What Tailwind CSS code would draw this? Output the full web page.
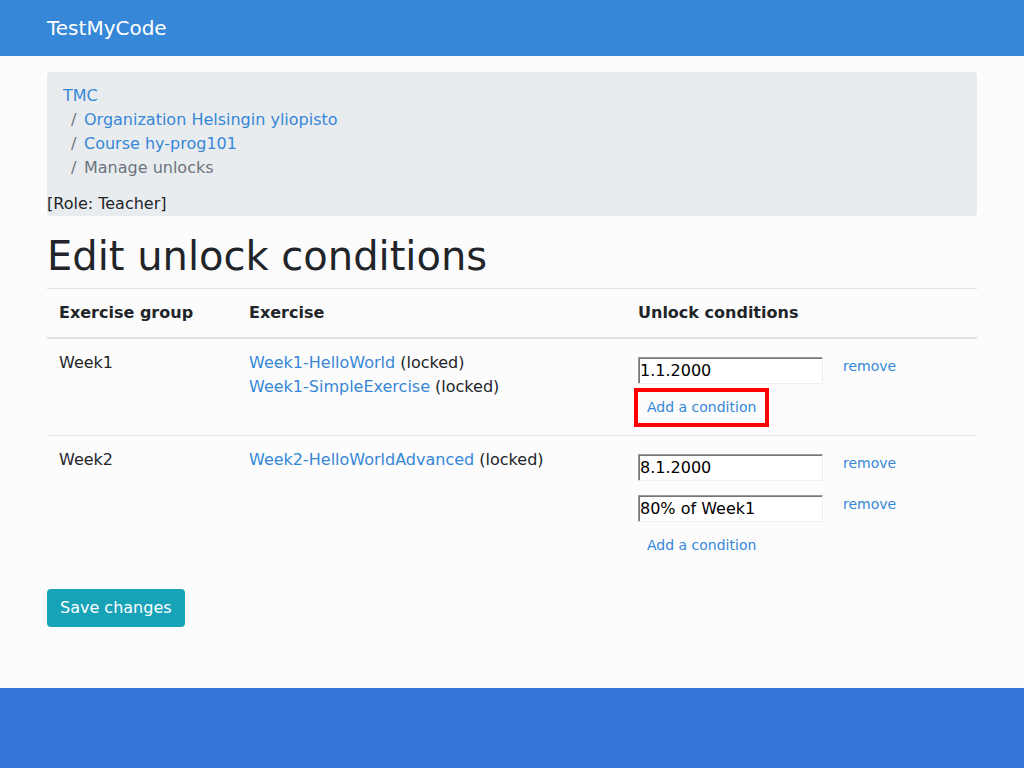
<!DOCTYPE html>
<html lang="en">
<head>
<meta charset="utf-8">
<meta name="viewport" content="width=device-width, initial-scale=1">
<title>Edit unlock conditions - TestMyCode</title>
<script src="https://cdn.jsdelivr.net/npm/@tailwindcss/browser@4"></script>
</head>
<body class="flex min-h-screen flex-col bg-[#fcfcfc] font-['DejaVu_Sans',sans-serif] text-base text-[#212529]">
<header class="bg-[#3687d7]">
  <nav class="mx-auto flex h-14 w-full max-w-[960px] items-center px-[15px]">
    <a href="#" class="text-xl text-white">TestMyCode</a>
  </nav>
</header>
<main class="mx-auto w-full max-w-[960px] grow px-[15px] pt-4 pb-10">
  <div class="rounded bg-[#e9ecef]">
    <nav aria-label="Breadcrumb">
      <ol class="px-4 py-3 text-[#6c757d]">
        <li><a href="#" class="text-[#3687d7]">TMC</a></li>
        <li class="flex pl-2"><span class="w-[13px]">/</span><a href="#" class="text-[#3687d7]">Organization Helsingin yliopisto</a></li>
        <li class="flex pl-2"><span class="w-[13px]">/</span><a href="#" class="text-[#3687d7]">Course hy-prog101</a></li>
        <li class="flex pl-2" aria-current="page"><span class="w-[13px]">/</span><span>Manage unlocks</span></li>
      </ol>
    </nav>
    <p>[Role: Teacher]</p>
  </div>
  <h1 class="mt-4 mb-2 text-[40px] leading-12">Edit unlock conditions</h1>
  <form>
    <table class="mb-4 w-full table-fixed border-separate border-spacing-0 text-left align-top">
      <colgroup><col class="w-[190px]"><col class="w-[389px]"><col></colgroup>
      <thead>
        <tr>
          <th scope="col" class="border-t border-b-2 border-[#dee2e6] p-3 font-bold">Exercise group</th>
          <th scope="col" class="border-t border-b-2 border-[#dee2e6] p-3 font-bold">Exercise</th>
          <th scope="col" class="border-t border-b-2 border-[#dee2e6] p-3 font-bold">Unlock conditions</th>
        </tr>
      </thead>
      <tbody>
        <tr class="align-top">
          <td class="p-3">Week1</td>
          <td class="p-3">
            <div><a href="#" class="text-[#3687d7]">Week1-HelloWorld</a> (locked)</div>
            <div><a href="#" class="text-[#3687d7]">Week1-SimpleExercise</a> (locked)</div>
          </td>
          <td class="p-3">
            <div class="flex items-start gap-[11px] pb-2">
              <input type="text" aria-label="Week1 condition 1" value="1.1.2000" class="mt-[6px] h-[27px] w-[185px] border border-t-[#9a9a9a] border-l-[#9a9a9a] border-r-[#eee] border-b-[#eee] bg-white px-px text-black shadow-[inset_1px_1px_0_#767676]">
              <button type="button" class="rounded px-[9px] py-[5px] text-sm leading-[21px] text-[#3687d7]">remove</button>
            </div>
            <button type="button" class="block px-[9px] py-[5px] text-sm leading-[21px] text-[#3687d7] outline-4 outline-[#ff0000]">Add a condition</button>
          </td>
        </tr>
        <tr class="align-top">
          <td class="border-t border-[#dee2e6] p-3">Week2</td>
          <td class="border-t border-[#dee2e6] p-3"><a href="#" class="text-[#3687d7]">Week2-HelloWorldAdvanced</a> (locked)</td>
          <td class="border-t border-[#dee2e6] p-3">
            <div class="flex items-start gap-[11px] pb-2">
              <input type="text" aria-label="Week2 condition 1" value="8.1.2000" class="mt-[6px] h-[27px] w-[185px] border border-t-[#9a9a9a] border-l-[#9a9a9a] border-r-[#eee] border-b-[#eee] bg-white px-px text-black shadow-[inset_1px_1px_0_#767676]">
              <button type="button" class="rounded px-[9px] py-[5px] text-sm leading-[21px] text-[#3687d7]">remove</button>
            </div>
            <div class="flex items-start gap-[11px] pb-2">
              <input type="text" aria-label="Week2 condition 2" value="80% of Week1" class="mt-[6px] h-[27px] w-[185px] border border-t-[#9a9a9a] border-l-[#9a9a9a] border-r-[#eee] border-b-[#eee] bg-white px-px text-black shadow-[inset_1px_1px_0_#767676]">
              <button type="button" class="rounded px-[9px] py-[5px] text-sm leading-[21px] text-[#3687d7]">remove</button>
            </div>
            <button type="button" class="block px-[9px] py-[5px] text-sm leading-[21px] text-[#3687d7]">Add a condition</button>
          </td>
        </tr>
      </tbody>
    </table>
    <button type="submit" class="rounded bg-[#17a2b8] px-[13px] py-[7px] text-white">Save changes</button>
  </form>
</main>
<footer class="h-20 bg-[#3575d7]"></footer>
</body>
</html>
